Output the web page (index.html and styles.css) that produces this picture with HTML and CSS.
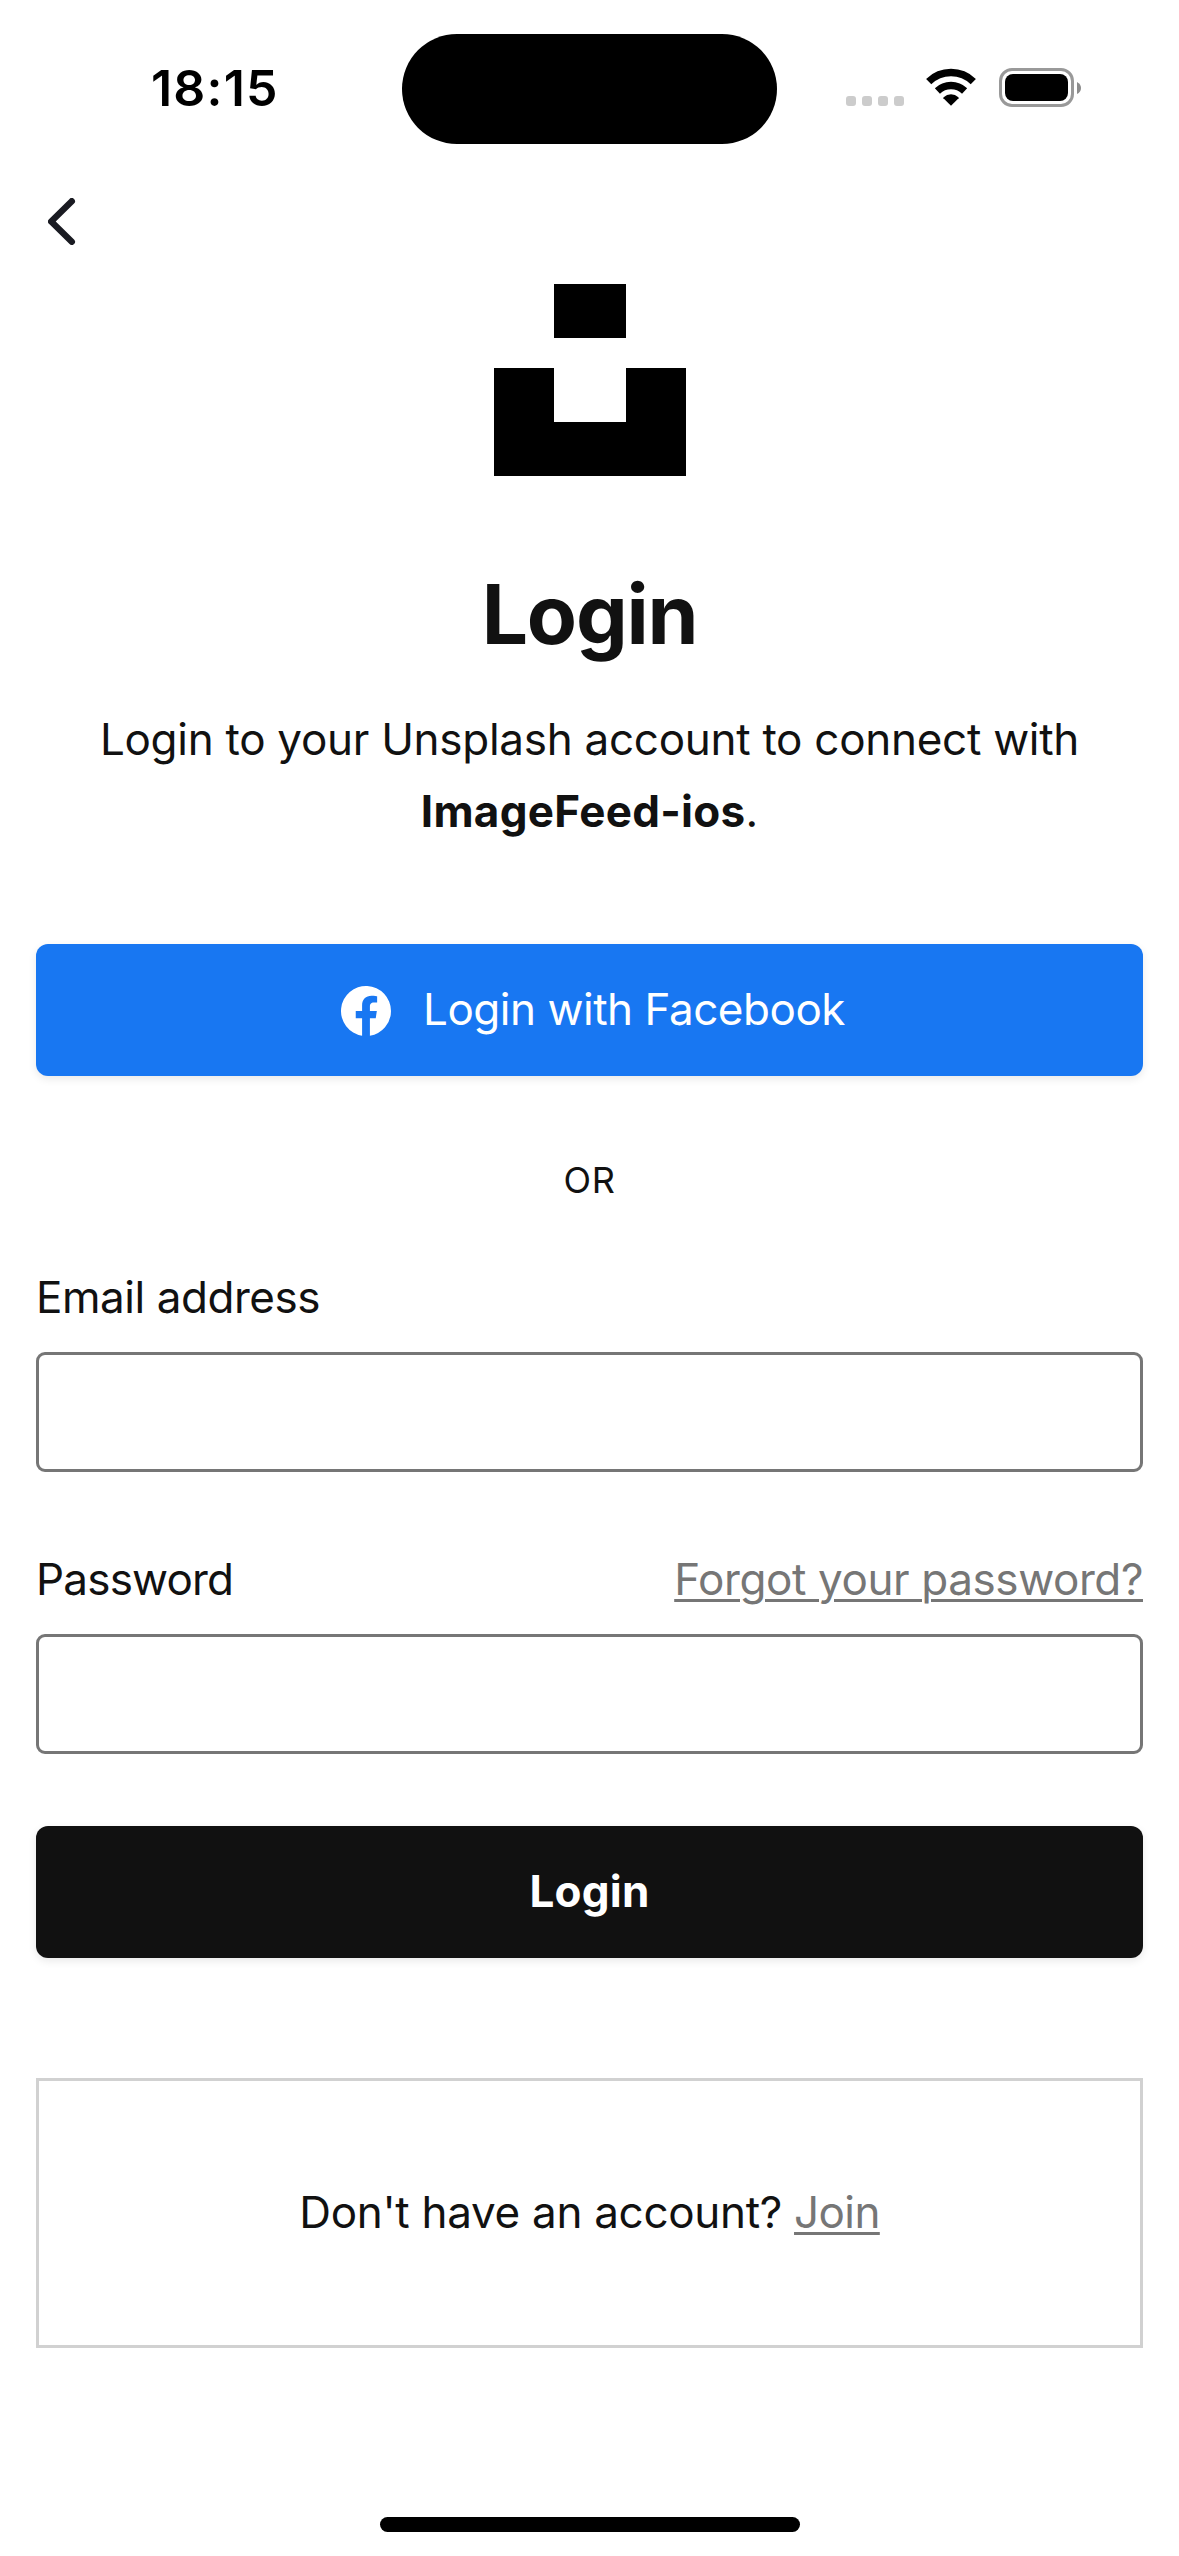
FILE: index.html
```html
<!DOCTYPE html>
<html lang="en">
<head>
<meta charset="utf-8">
<title>Login</title>
<link rel="stylesheet" href="styles.css">
</head>
<body>
<header class="status">
  <div class="time">18:15</div>
  <div class="island"></div>
  <div class="indicators">
    <div class="dots"><i></i><i></i><i></i><i></i></div>
    <svg class="wifi" width="50" height="38" viewBox="0 0 50 38">
      <g fill="none" stroke="#000" stroke-width="7.4">
        <path d="M2.7 13.6A32 32 0 0 1 47.3 13.6"/>
        <path d="M11.4 23A19.6 19.6 0 0 1 38.6 23"/>
      </g>
      <path d="M25 37.8L17.400 30.300Q17.200 29.700 17.600 29.200Q20.800 26.300 25 26.300Q29.200 26.300 32.400 29.200Q32.800 29.700 32.600 30.300Z"/>
    </svg>
    <div class="battery">
      <div class="shell"><div class="charge"></div></div>
      <svg class="nub" width="4" height="12" viewBox="0 0 4 12"><path d="M0 0Q4 2 4 6T0 12Z" fill="#8c8c8c"/></svg>
    </div>
  </div>
</header>
<nav class="nav">
  <svg width="28" height="47" viewBox="0 0 28 47"><path d="M23.800 3.200L3.200 23.500L23.800 43.800" fill="none" stroke="#1a1b22" stroke-width="6.400" stroke-linecap="round" stroke-linejoin="round"/></svg>
</nav>
<main class="page">
  <svg class="logo" width="192" height="192" viewBox="0 0 32 32"><path d="M10 9V0h12v9H10zm12 5h10v18H0V14h10v9h12v-9z"/></svg>
  <h1 class="title">Login</h1>
  <p class="intro"><span class="intro-text">Login to your Unsplash account to connect with</span><br><strong>ImageFeed-ios</strong>.</p>
  <button class="button facebook">
    <svg width="50" height="50" viewBox="0 0 24 24"><path fill="#fff" d="M24 12a12 12 0 1 0-13.875 11.854v-8.385H7.078V12h3.047V9.356c0-3.007 1.791-4.668 4.533-4.668 1.312 0 2.686.234 2.686.234v2.953H15.830c-1.491 0-1.956.925-1.956 1.875V12h3.328l-.532 3.469h-2.796v8.385A12 12 0 0 0 24 12z"/></svg>
    <span>Login with Facebook</span>
  </button>
  <p class="divider">OR</p>
  <form class="form">
    <div class="label-row"><label class="email-label" for="email">Email address</label></div>
    <input class="field" id="email" type="email">
    <div class="label-row second"><label class="password-label" for="password">Password</label><a class="link forgot" href="#">Forgot your password?</a></div>
    <input class="field" id="password" type="password">
    <button class="button submit" type="button"><span>Login</span></button>
  </form>
  <p class="join"><span class="question">Don't have an account?</span><a class="link join-link" href="#">Join</a></p>
</main>
<div class="home-bar"></div>
</body>
</html>
```
FILE: styles.css
```css
* { box-sizing: border-box; }
body {
  margin: 0;
  width: 1179px;
  height: 2556px;
  display: flex;
  flex-direction: column;
  background: #fff;
  color: #111;
  font-family: Inter, "Liberation Sans", sans-serif;
  font-size: 44px;
  line-height: 72px;
}
h1, p { margin: 0; }
.status {
  height: 177px;
  display: grid;
  grid-template-columns: 402px 375px 1fr;
}
.time {
  padding: 52px 0 0 151px;
  font-size: 50px;
  font-weight: 600;
  letter-spacing: 1.2px;
  color: #000;
}
.island {
  height: 110px;
  margin-top: 34px;
  border-radius: 55px;
  background: #000;
}
.indicators {
  display: flex;
  align-items: flex-start;
  padding: 68px 0 0 69px;
}
.dots { display: flex; gap: 6px; margin-top: 28px; }
.dots i { width: 10px; height: 10px; border-radius: 3px; background: #ccc; }
.wifi { margin-left: 22px; }
.battery { display: flex; align-items: center; gap: 3px; margin-left: 23px; }
.shell {
  width: 75px;
  height: 39px;
  padding: 3px;
  border: 3px solid #999;
  border-radius: 13px;
}
.charge { height: 27px; border-radius: 8px; background: #000; }
.nav { height: 107px; padding: 21px 0 0 48px; }
.nav svg, .logo { display: block; }
.page { padding: 0 36px; flex: 1; }
.logo { margin: 0 auto; }
.title {
  margin-top: 91px;
  font-size: 82px;
  font-weight: 700;
  line-height: 96px;
  letter-spacing: -1.2px;
  text-align: center;
}
.intro { margin-top: 40px; text-align: center; white-space: nowrap; }
.intro-text { letter-spacing: -.28px; }
.intro strong { font-weight: 700; letter-spacing: .3px; }
.button {
  display: flex;
  align-items: center;
  justify-content: center;
  width: 100%;
  height: 132px;
  padding: 0;
  border: 0;
  border-radius: 12px;
  color: #fff;
  font: inherit;
  box-shadow: 0 3px 9px rgba(0, 0, 0, .09);
}
.button span { padding-bottom: 2px; }
.facebook {
  margin-top: 97px;
  padding-left: 7px;
  gap: 32px;
  background: #1877f2;
  letter-spacing: -.47px;
}
.facebook svg { margin-top: 2px; }
.divider {
  margin-top: 80px;
  font-size: 36px;
  line-height: 48px;
  letter-spacing: .6px;
  text-align: center;
}
.form { margin-top: 57px; }
.label-row { display: flex; justify-content: space-between; }
.email-label { letter-spacing: -.45px; }
.password-label { letter-spacing: -.8px; }
.second { margin-top: 71px; }
.field {
  display: block;
  width: 100%;
  height: 120px;
  margin-top: 19px;
  padding: 0 30px;
  border: 3px solid #767676;
  border-radius: 9px;
  background: #fff;
  font: inherit;
}
.link {
  color: #767676;
  text-decoration: underline;
  text-decoration-thickness: 3px;
  text-underline-offset: 4px;
}
.forgot { letter-spacing: -.4px; }
.submit { margin-top: 72px; background: #111; font-weight: 700; letter-spacing: .2px; }
.join {
  display: flex;
  align-items: center;
  justify-content: center;
  gap: 12px;
  height: 270px;
  margin-top: 120px;
  padding-bottom: 2px;
  border: 3px solid #d1d1d1;
}
.question { letter-spacing: -.3px; }
.join-link { letter-spacing: -.6px; }
.home-bar {
  width: 420px;
  height: 15px;
  margin: 0 auto 24px;
  border-radius: 8px;
  background: #000;
}
```
